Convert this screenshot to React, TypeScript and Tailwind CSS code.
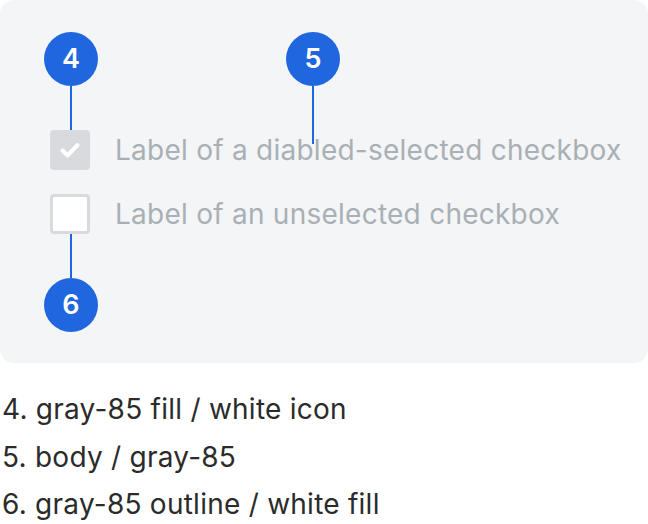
import React from "react";

function Badge({ n, className }: { n: string; className: string }) {
  return (
    <div
      className={`absolute flex h-[54px] w-[54px] items-center justify-center rounded-full bg-[#1f66df] text-[27px] font-semibold text-white ${className}`}
    >
      {n}
    </div>
  );
}

export default function App() {
  return (
    <div className="w-[648px] h-[524px] bg-white" style={{ fontFamily: "Inter, 'Noto Sans', sans-serif" }}>
      <div className="relative h-[363px] rounded-[14px] bg-[#f4f5f7] pl-[50px] pt-[130px]">
        <div className="flex flex-col gap-[24px]">
          <div className="flex items-center gap-[25px]">
            <div className="flex h-[40px] w-[40px] items-center justify-center rounded-[4px] bg-[#d8dadd]">
              <svg width="22" height="22" viewBox="0 0 22 22">
                <path d="M3.5 11.5 L8.5 16.5 L18.5 6" fill="none" stroke="white" strokeWidth="4" strokeLinecap="round" strokeLinejoin="round" />
              </svg>
            </div>
            <span className="text-[28px] leading-none tracking-[0.25px] text-[#a9b0b5]">Label of a diabled-selected checkbox</span>
          </div>
          <div className="flex items-center gap-[25px]">
            <div className="h-[40px] w-[40px] rounded-[4px] border-[3px] border-[#d8dadd] bg-white" />
            <span className="text-[28px] leading-none tracking-[0.25px] text-[#a9b0b5]">Label of an unselected checkbox</span>
          </div>
        </div>
        <div className="absolute left-[70px] top-[86px] h-[44px] w-[2px] bg-[#1f66df]" />
        <div className="absolute left-[312px] top-[86px] h-[58px] w-[2px] bg-[#1f66df]" />
        <div className="absolute left-[70px] top-[234px] h-[44px] w-[2px] bg-[#1f66df]" />
        <Badge n="4" className="left-[44px] top-[32px]" />
        <Badge n="5" className="left-[286px] top-[32px]" />
        <Badge n="6" className="left-[44px] top-[278px]" />
      </div>
      <div className="pl-[2px] pt-[23px] text-[28px] leading-[47.5px] tracking-[0.25px] text-[#2b2b2b]">
        <div>4. gray-85 fill / white icon</div>
        <div>5. body / gray-85</div>
        <div>6. gray-85 outline / white fill</div>
      </div>
    </div>
  );
}
